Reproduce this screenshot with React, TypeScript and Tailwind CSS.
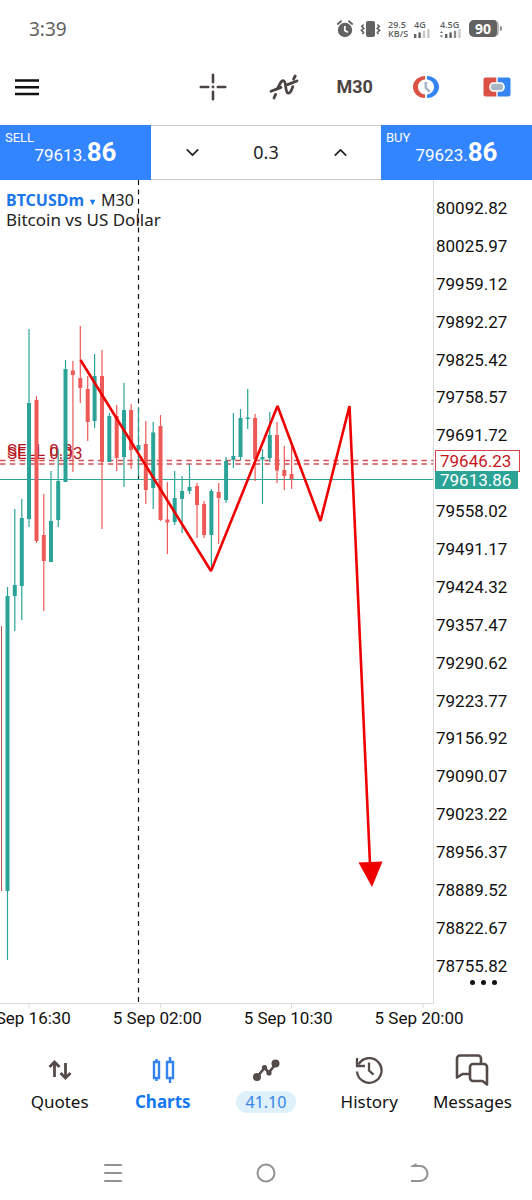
import { ChevronDown, ChevronUp } from "lucide-react";
import { useState } from "react";

type Candle = [x: number, high: number, low: number, bodyTop: number, bodyBottom: number, up: 0 | 1];

const UP = "#2ba396";
const DOWN = "#ee5a57";

const candles: Candle[] = [
  [7.5, 407, 780, 416, 711, 1],
  [14.8, 329, 451, 405, 416, 1],
  [21.8, 319, 440, 338, 406, 1],
  [29, 149, 347, 223, 339, 1],
  [36.5, 216, 363, 220, 361, 0],
  [43.8, 314, 431, 355, 381, 0],
  [51, 291, 382, 341, 382, 1],
  [58.2, 269, 347, 301, 340, 1],
  [65.5, 180, 302, 189, 302, 1],
  [72.9, 181, 292, 190.5, 195, 0],
  [80.3, 146, 223, 198, 208, 0],
  [87.7, 196, 261, 209, 242, 0],
  [94.6, 174, 248, 196, 241, 1],
  [102, 170, 349, 196, 282, 0],
  [109.3, 233, 282, 236, 282, 1],
  [116.7, 225, 291, 236, 278, 0],
  [124, 203, 307, 230, 277, 1],
  [131.1, 224, 289, 230, 270, 0],
  [138.5, 227, 296, 265, 270, 1],
  [145.8, 241, 324, 264, 310, 0],
  [153.2, 242, 329, 252.5, 308, 1],
  [160.5, 235, 341, 246, 340, 0],
  [167.4, 302, 374, 339.5, 342.5, 0],
  [174.7, 291, 345, 318, 342, 1],
  [182.1, 296, 353, 311, 319, 1],
  [189.5, 284, 314, 307, 311, 1],
  [197, 303, 358, 306, 325, 0],
  [204.1, 321, 358, 324, 355, 0],
  [211.4, 309, 390, 311, 355, 1],
  [218.7, 303, 364, 312, 318, 0],
  [226.1, 277, 323, 281, 320, 1],
  [233.4, 233, 288, 276, 280, 1],
  [240.5, 229, 280, 238, 277, 1],
  [247.7, 209, 249, 237.5, 239, 1],
  [255.1, 234, 301, 238, 279, 0],
  [262.5, 269, 324, 277, 279.5, 1],
  [269.8, 232, 282, 255, 278, 1],
  [277, 242, 303, 255, 290.5, 0],
  [284.3, 266, 310, 290, 296, 0],
  [291.6, 263, 309, 294, 299, 0],
];

// the empty row is covered by the order and bid tags
const prices = [
  "80092.82", "80025.97", "79959.12", "79892.27", "79825.42", "79758.57", "79691.72",
  "", "79558.02", "79491.17", "79424.32", "79357.47", "79290.62", "79223.77",
  "79156.92", "79090.07", "79023.22", "78956.37", "78889.52", "78822.67", "78755.82",
];

const times = ["5 Sep 16:30", "5 Sep 02:00", "5 Sep 10:30", "5 Sep 20:00"];

function Signal({ bars }: { bars: string[] }) {
  return (
    <svg width="16" height="9" viewBox="0 0 16 9" aria-hidden="true">
      {bars.map((fill, i) => (
        <rect key={i} x={i * 4.4} y={5 - i * 1.6} width="2.4" height={4 + i * 1.6} fill={fill} />
      ))}
    </svg>
  );
}

function StatusBar() {
  return (
    <div className="flex h-[57px] items-center justify-between pr-[30px] pl-[29px] text-[#626262]">
      <span className="font-['Noto_Sans',sans-serif] text-[19px] leading-6">3:39</span>
      <div className="flex items-center">
        <svg width="16" height="18" viewBox="0 0 16 18" aria-hidden="true">
          <circle cx="8" cy="10" r="7.2" fill="#626262" />
          <path d="M7.8 6v4.4l3 1.8" fill="none" stroke="#fff" strokeWidth="1.7" />
          <path d="M.8 4 4 1.2M15.2 4 12 1.2" stroke="#626262" strokeWidth="1.8" strokeLinecap="round" />
        </svg>
        <svg className="ml-[7px]" width="21" height="18" viewBox="0 0 21 18" aria-hidden="true">
          <rect x="6" y="1" width="9" height="16" rx="2" fill="#626262" />
          <path d="M3.6 4.5 1.8 6.4l2 2-2.4 2 2.2 2-1 1.8M17.4 4.5l1.8 1.9-2 2 2.4 2-2.2 2 1 1.8" fill="none" stroke="#626262" strokeWidth="1.6" />
        </svg>
        <div className="ml-[7px] w-[20px] font-['Open_Sans',sans-serif] text-[9px] leading-[9px] font-semibold">
          29.5
          <br />
          KB/S
        </div>
        <div className="ml-[6px] w-[18px] font-['Open_Sans',sans-serif] text-[9px] leading-[9px] font-semibold">
          4G
          <Signal bars={["#626262", "#626262", "#c8c8c8", "#c8c8c8"]} />
        </div>
        <div className="ml-[8px] w-[22px] font-['Open_Sans',sans-serif] text-[9px] leading-[9px] font-semibold">
          4.5G
          <div className="flex gap-[2px]">
            <svg width="3" height="9" viewBox="0 0 3 9" aria-hidden="true">
              <path d="M0 4 1.5 2 3 4zM0 6.5l1.5 2 1.5-2z" fill="#626262" />
            </svg>
            <Signal bars={["#626262", "#626262", "#8a8a8a", "#c8c8c8"]} />
          </div>
        </div>
        <div className="ml-[7px] flex items-center">
          <span className="flex h-[17px] w-[30px] items-center justify-center rounded-[5px] border-r-2 border-[#b5b5b5] bg-[#626262] font-['Open_Sans',sans-serif] text-[14px] font-bold text-white">
            90
          </span>
          <span className="ml-px h-[5px] w-[2px] rounded-r bg-[#8f8f8f]" />
        </div>
      </div>
    </div>
  );
}

function Toolbar() {
  const cell = "flex h-full items-center justify-center";
  return (
    <header className="flex h-[68px] items-center justify-between pb-[9px]">
      <button aria-label="Menu" className="flex h-full w-[54px] items-center justify-center">
        <svg width="24" height="18" viewBox="0 0 24 18">
          <path d="M0 2.5h24M0 9.2h24M0 16h24" stroke="#111" strokeWidth="2.6" />
        </svg>
      </button>
      <div className="grid h-full w-2/3 grid-cols-5">
        <button aria-label="Crosshair" className={cell}>
          <svg width="28" height="28" viewBox="0 0 28 28">
            <path d="M14 1.8v7.4M14 18.8v7.4M1.8 14h7.4M18.8 14h7.4" stroke="#4b4341" strokeWidth="2.6" strokeLinecap="round" />
            <circle cx="14" cy="14" r="1.4" fill="#4b4341" />
          </svg>
        </button>
        <button aria-label="Indicators" className={cell}>
          <svg width="30" height="26" viewBox="0 0 30 26" fill="none" stroke="#4b4341" strokeWidth="2.8" strokeLinecap="round">
            <path d="M2 17.3 12 13.4M18.5 10.6 28 7" />
            <path d="M5 24 6.6 20.4M8.6 14.8C10.5 10.5 12 6.2 14.6 6.8c3.4.8.8 12.6 5 12.4 2.2 0 3-3 4.2-6.6M24.6 5.2 26.2 2" />
          </svg>
        </button>
        <button className={`${cell} font-[Roboto,sans-serif] text-[18px] font-bold text-[#4b4341]`}>M30</button>
        <button aria-label="Trading sessions" className={cell}>
          <svg width="28" height="24" viewBox="0 0 28 24">
            <path d="M13 1C6 1 1 6 1 12s5 11 12 11v-3.6C9 19 6 16 6 12s3-7 7-7.4z" fill="#dc5145" />
            <path d="M15 1c7 0 12 5 12 11s-5 11-12 11v-3.6c4-.4 7-3.4 7-7.4s-3-7-7-7.4z" fill="#3485f4" />
            <path d="M13.8 7v5.8l4 4" fill="none" stroke="#a9b7c6" strokeWidth="2.6" />
          </svg>
        </button>
        <button aria-label="One-click trading" className={cell}>
          <svg width="28" height="20" viewBox="0 0 28 20">
            <path d="M2.5.5H13.3v19H2.5a2 2 0 0 1-2-2v-15a2 2 0 0 1 2-2z" fill="#dc5145" />
            <path d="M14.7.5H25.5a2 2 0 0 1 2 2v15a2 2 0 0 1-2 2H14.7z" fill="#3485f4" />
            <rect x="7" y="6" width="14" height="8" rx="3.5" fill="#a9b7c6" stroke="#fff" strokeWidth="1.6" />
          </svg>
        </button>
      </div>
    </header>
  );
}

function QuoteButton({ side, price, pips }: { side: string; price: string; pips: string }) {
  return (
    <button className="flex flex-col bg-[#3384ff] pt-[6px] pl-[5px] text-left font-[Roboto,sans-serif] text-white">
      <span className="text-[13px] leading-[14px]">{side}</span>
      <span className="-mt-[7px] self-center pr-[5px] text-[17px] leading-[28px]">
        {price}.<span className="text-[26px] font-bold">{pips}</span>
      </span>
    </button>
  );
}

function QuoteBar() {
  const [volume, setVolume] = useState("0.3");
  const step = (delta: number) => setVolume((v) => String(Math.max(0, Math.round((Number(v) + delta) * 100) / 100)));
  return (
    <div className="grid h-[55px] grid-cols-[minmax(0,151fr)_minmax(0,230fr)_minmax(0,151fr)]">
      <QuoteButton side="SELL" price="79613" pips="86" />
      <div className="flex items-center border-y border-[#c9c9c9]">
        <button aria-label="Decrease volume" onClick={() => step(-0.1)} className="flex w-[82px] shrink-0 justify-center">
          <ChevronDown size={21} className="text-[#222]" />
        </button>
        <input
          aria-label="Volume"
          value={volume}
          onChange={(e) => setVolume(e.target.value)}
          className="min-w-0 flex-1 bg-transparent text-center font-['Noto_Sans',sans-serif] text-[18px] text-[#222] outline-none"
        />
        <button aria-label="Increase volume" onClick={() => step(0.1)} className="flex w-[82px] shrink-0 justify-center">
          <ChevronUp size={21} className="text-[#222]" />
        </button>
      </div>
      <QuoteButton side="BUY" price="79623" pips="86" />
    </div>
  );
}

function Chart() {
  return (
    <svg viewBox="0 0 434 828" className="block h-auto w-full" role="img" aria-label="BTCUSDm M30 candlestick chart">
      <path d="M433.5 0v824M0 823.5h434M29 824v4M160.5 824v4M291.5 824v4M423 824v4" stroke="#dcdcdc" />
      <path d="M138.5 0v824" stroke="#111" strokeWidth="1.2" strokeDasharray="5 4.5" />
      <g fill="#b3161d" className="font-[Roboto,sans-serif] text-[17px]">
        <text x="7" y="276">SELL 0.3</text>
        <text x="7" y="279">SELL 0.03</text>
      </g>
      <path d="M0 280.5h433M0 284h433" stroke="#cf5156" strokeWidth="1.3" strokeDasharray="5.5 4.3" />
      <path d="M0 299.5h433" stroke={UP} strokeWidth="1.2" />
      <path d="M1.5 446v265" stroke="#c0504d" />
      {candles.map(([x, high, low, top, bottom, up]) => (
        <g key={x} fill={up ? UP : DOWN}>
          <rect x={x - 0.6} y={high} width="1.2" height={low - high} />
          <rect x={x - 2} y={top} width="4" height={bottom - top} />
        </g>
      ))}
      <path d="M80.5 180 211 391 277.5 226 320.5 341 349.5 226 370 684" fill="none" stroke="#ee0000" strokeWidth="2.6" strokeLinejoin="bevel" />
      <path d="M358.5 682.5 382.5 681.5 372 707z" fill="#ee0000" />
    </svg>
  );
}

function ChartPanel() {
  return (
    <main className="font-[Roboto,sans-serif] text-[17px] leading-5 text-[#111]">
      <div className="flex">
        <div className="relative flex-1">
          <Chart />
          <div className="absolute top-[10px] left-[6px] font-['Noto_Sans',sans-serif] text-[16px] leading-5 text-[#222]">
            <button className="block">
              <span className="font-bold text-[#1b76e8]">BTCUSDm</span>
              <span className="px-1 align-middle text-[9px] leading-none text-[#1b76e8]">▼</span>
              M30
            </button>
            <div className="text-[17px]">Bitcoin vs US Dollar</div>
          </div>
        </div>
        <div className="relative flex w-[98px] flex-col pt-[18px] pb-[20px]">
          <ul className="flex flex-1 flex-col justify-between pl-[2px]">
            {prices.map((p, i) => (
              <li key={i} className="h-5">{p}</li>
            ))}
          </ul>
          <button aria-label="More" className="flex h-3 items-center justify-center gap-[6px]">
            <span className="size-[5px] rounded-full bg-[#111]" />
            <span className="size-[5px] rounded-full bg-[#111]" />
            <span className="size-[5px] rounded-full bg-[#111]" />
          </button>
          <div className="absolute top-[270px] left-px h-[22px] w-[85px] border border-[#d8444a] bg-white pl-[4px] text-[#c4161c]">79646.23</div>
          <div className="absolute top-[291px] left-px h-[18px] w-[83px] bg-[#2ba396] pl-[5px] leading-[18px] text-white">79613.86</div>
        </div>
      </div>
      <div className="flex overflow-hidden">
        <div className="-ml-[39px] flex w-full shrink-0 whitespace-nowrap">
          {times.map((t) => (
            <span key={t} className="w-[24.6%] shrink-0 text-center">{t}</span>
          ))}
        </div>
      </div>
    </main>
  );
}

function QuotesIcon() {
  return (
    <svg width="24" height="20" viewBox="0 0 24 20" fill="none" stroke="#554b49" strokeWidth="2.8">
      <path d="M6.5 17V2.5M1.5 7l5-5 5 5M17.5 3v14.5M12.5 13l5 5 5-5" />
    </svg>
  );
}

function ChartsIcon() {
  return (
    <svg width="24" height="28" viewBox="0 0 24 28" fill="none" stroke="#3384f0" strokeWidth="2.4">
      <path d="M3 6h5v16H3zM5.5 3v3M5.5 22v3M16 6h6v16h-6zM19 1v5M19 22v5" />
    </svg>
  );
}

function TradeIcon() {
  return (
    <svg width="28" height="24" viewBox="0 0 28 24" fill="#554b49">
      <path d="M5 19 12.5 10 17 14.5 23.5 6" fill="none" stroke="#554b49" strokeWidth="2.6" />
      <circle cx="5" cy="19" r="4" />
      <circle cx="12.5" cy="9.5" r="2.6" />
      <circle cx="17" cy="15" r="2.6" />
      <circle cx="23.5" cy="5.5" r="4" />
    </svg>
  );
}

function HistoryIcon() {
  return (
    <svg width="28" height="28" viewBox="0 0 28 28" fill="none" stroke="#554b49" strokeWidth="2.3">
      <path d="M2 15.5A12.3 12.3 0 1 0 3.5 8.5" />
      <path d="M2 2v8h8M14 6.5v8l4.5 4.2" />
    </svg>
  );
}

function MessagesIcon() {
  return (
    <svg width="34" height="32" viewBox="0 0 34 32" fill="none" stroke="#554b49" strokeWidth="2.6" strokeLinejoin="round">
      <path d="M14 20H7.5L2 23.5V4.5a3 3 0 0 1 3-3h18a3 3 0 0 1 3 3V9" />
      <path d="M18 10h11a3 3 0 0 1 3 3v17.5L27.5 27H18a3 3 0 0 1-3-3V13a3 3 0 0 1 3-3z" />
    </svg>
  );
}

function BottomNav() {
  const item = "flex flex-col items-center gap-[5px]";
  const icon = "flex h-8 items-center";
  return (
    <nav className="mt-[26px] grid grid-cols-5 px-2 font-['Noto_Sans',sans-serif] text-[17px] leading-[22px] text-[#111]">
      <a href="#quotes" className={item}>
        <span className={icon}><QuotesIcon /></span>
        Quotes
      </a>
      <a href="#charts" aria-current="page" className={`${item} font-bold text-[#1478f5]`}>
        <span className={icon}><ChartsIcon /></span>
        Charts
      </a>
      <a href="#trade" className={item}>
        <span className={icon}><TradeIcon /></span>
        <span className="rounded-full bg-[#def1fb] px-[10px] text-[16px] text-[#3384e8]">41.10</span>
      </a>
      <a href="#history" className={item}>
        <span className={icon}><HistoryIcon /></span>
        History
      </a>
      <a href="#messages" className={item}>
        <span className={icon}><MessagesIcon /></span>
        Messages
      </a>
    </nav>
  );
}

function SystemNav() {
  return (
    <div className="mt-[47px] grid grid-cols-3 justify-items-center px-9 pb-[13px]">
      <button aria-label="Recents">
        <svg width="20" height="26" viewBox="0 0 20 26">
          <path d="M2 5h16M2 13h16M2 21h16" stroke="#929292" strokeWidth="2" strokeLinecap="round" />
        </svg>
      </button>
      <button aria-label="Home">
        <svg width="22" height="26" viewBox="0 0 22 26">
          <circle cx="11" cy="13" r="8.5" fill="none" stroke="#929292" strokeWidth="2" />
        </svg>
      </button>
      <button aria-label="Back">
        <svg width="20" height="26" viewBox="0 0 20 26">
          <path d="M2 21h9a7.5 7.5 0 0 0 0-15H3" fill="none" stroke="#929292" strokeWidth="2" />
          <path d="M1 7 7.5 3v4z" fill="#929292" />
        </svg>
      </button>
    </div>
  );
}

export default function App() {
  return (
    <div className="bg-white">
      <StatusBar />
      <Toolbar />
      <QuoteBar />
      <ChartPanel />
      <BottomNav />
      <SystemNav />
    </div>
  );
}
